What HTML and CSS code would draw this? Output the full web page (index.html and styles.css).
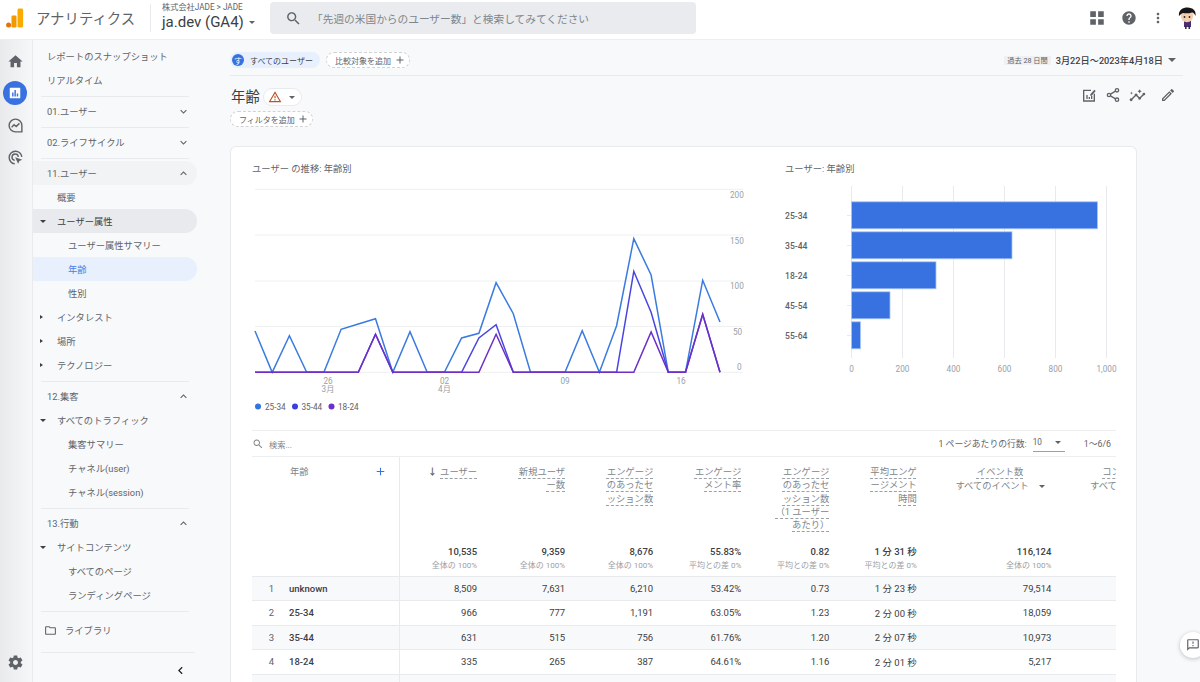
FILE: index.html
```html
<!DOCTYPE html>
<html lang="ja">
<head>
  <meta charset="UTF-8">
  <title>アナリティクス | 年齢</title>
  <link rel="stylesheet" href="styles.css">
</head>
<body>
  <svg class="sprite" width="0" height="0">
    <symbol id="i-more" viewBox="0 0 24 24"><path d="M7.41 8.59L12 13.17l4.59-4.58L18 10l-6 6-6-6z"/></symbol>
    <symbol id="i-less" viewBox="0 0 24 24"><path d="M12 8l-6 6 1.41 1.41L12 10.83l4.59 4.58L18 14z"/></symbol>
    <symbol id="i-search" viewBox="0 0 24 24"><path d="M15.5 14h-.79l-.28-.27C15.41 12.59 16 11.11 16 9.5 16 5.91 13.09 3 9.5 3S3 5.91 3 9.5 5.91 16 9.5 16c1.61 0 3.09-.59 4.23-1.57l.27.28v.79l5 4.99L20.49 19l-4.99-5zm-6 0C7.01 14 5 11.99 5 9.5S7.01 5 9.5 5 14 7.01 14 9.5 11.99 14 9.5 14z"/></symbol>
    <symbol id="i-plus" viewBox="0 0 24 24"><path d="M19 13h-6v6h-2v-6H5v-2h6V5h2v6h6z"/></symbol>
  </svg>

  <!-- top bar -->
  <header class="topbar">
    <svg class="logo" viewBox="0 0 18 20" width="18" height="20">
      <circle cx="2.6" cy="17" r="2.5" fill="#e8710a"/>
      <rect x="5.5" y="7.5" width="5" height="12" rx="1.2" fill="#f29900"/>
      <rect x="11.5" y="0.5" width="5.6" height="19" rx="1.4" fill="#f9ab00"/>
    </svg>
    <span class="app-name">アナリティクス</span>
    <div class="account">
      <div class="account-path">株式会社JADE &gt; JADE</div>
      <div class="account-name">ja.dev (GA4) <i class="caret"></i></div>
    </div>
    <div class="searchbox">
      <svg width="17" height="17" class="search-icon"><use href="#i-search"/></svg>
      <span>「先週の米国からのユーザー数」と検索してみてください</span>
    </div>
    <div class="top-icons">
      <svg class="ic" width="18" height="18" viewBox="0 0 24 24"><path d="M3 3h7.500v7.500H3zM13.500 3H21v7.500h-7.500zM3 13.500h7.500V21H3zM13.500 13.500H21V21h-7.500z"/></svg>
      <svg class="ic help" width="16" height="16" viewBox="0 0 24 24"><path d="M12 2C6.48 2 2 6.48 2 12s4.48 10 10 10 10-4.48 10-10S17.52 2 12 2zm1 17h-2v-2h2v2zm2.07-7.75l-.9.92C13.45 12.9 13 13.5 13 15h-2v-.5c0-1.1.45-2.1 1.17-2.83l1.24-1.26c.37-.36.59-.86.59-1.41 0-1.1-.9-2-2-2s-2 .9-2 2H8c0-2.21 1.79-4 4-4s4 1.79 4 4c0 .88-.36 1.68-.93 2.25z"/></svg>
      <svg class="ic dots" width="16" height="18" viewBox="0 0 24 24"><path d="M12 8c1.1 0 2-.9 2-2s-.9-2-2-2-2 .9-2 2 .9 2 2 2zm0 2c-1.1 0-2 .9-2 2s.9 2 2 2 2-.9 2-2-.9-2-2-2zm0 6c-1.1 0-2 .9-2 2s.9 2 2 2 2-.9 2-2-.9-2-2-2z"/></svg>
      <svg class="avatar" width="20" height="22" viewBox="0 0 20 22">
        <rect x="7" y="14" width="7" height="6" fill="#4b2d73"/>
        <rect x="8" y="19" width="1.6" height="3" fill="#333"/>
        <rect x="11.5" y="19" width="1.6" height="3" fill="#333"/>
        <circle cx="10" cy="9" r="6.2" fill="#f4cfae"/>
        <path d="M2 9C1 3 6 .5 10.500 .5 16 .5 19.500 4 18.500 9c-1-2-2-3.500-3.500-3.500C12 6.500 8 6.500 6 6c-1.500 .5-3 2-4 3z" fill="#16161a"/>
        <circle cx="7.500" cy="10" r=".9" fill="#222"/>
        <circle cx="12.500" cy="10" r=".9" fill="#222"/>
      </svg>
    </div>
  </header>

  <div class="layout">
    <!-- icon rail -->
    <div class="rail">
      <a class="rail-item"><svg class="ic" width="17" height="17" viewBox="0 0 24 24"><path d="M10 20v-6h4v6h5v-8h3L12 3 2 12h3v8z"/></svg></a>
      <a class="rail-item"><span class="rail-active"><svg width="14" height="14" viewBox="0 0 24 24"><path fill="#fff" fill-rule="evenodd" d="M4 3h16a1 1 0 0 1 1 1v16a1 1 0 0 1-1 1H4a1 1 0 0 1-1-1V4a1 1 0 0 1 1-1zm3 8v7h2.500v-7zm4-4v11h2.500V7zm4 6v5h2.500v-5z"/></svg></span></a>
      <a class="rail-item">
        <svg class="ol" width="17" height="17" viewBox="0 0 24 24" stroke="#5f6368" stroke-width="2"><path d="M21 20.500V12a9 9 0 1 0-9 9h9z"/><path d="M6.500 14.500l3.500-3.500 3 2.500 4.500-4.500"/></svg>
      </a>
      <a class="rail-item">
        <svg class="ol" width="17" height="17" viewBox="0 0 24 24" stroke="#5f6368" stroke-width="2"><path d="M21 11a9 9 0 1 0-10 10"/><path d="M16 11a4.500 4.500 0 1 0-5 5"/><path d="M11.500 11.500l10 3.500-4 1.800-1.800 4z" fill="#5f6368" stroke="none"/></svg>
      </a>
      <a class="rail-item rail-bottom"><svg class="ic" width="17" height="17" viewBox="0 0 24 24"><path d="M19.430 12.980c.04-.32.07-.64.07-.98s-.03-.66-.07-.98l2.110-1.650c.19-.15.24-.42.12-.64l-2-3.460c-.12-.22-.39-.3-.61-.22l-2.490 1c-.52-.4-1.080-.73-1.690-.98l-.38-2.650C14.460 2.180 14.250 2 14 2h-4c-.25 0-.46.18-.49.42l-.38 2.650c-.61.25-1.170.59-1.690.98l-2.490-1c-.23-.09-.49 0-.61.22l-2 3.460c-.13.22-.07.49.12.64l2.110 1.650c-.04.32-.07.65-.07.98s.03.66.07.98l-2.110 1.650c-.19.15-.24.42-.12.64l2 3.460c.12.22.39.3.61.22l2.490-1c.52.4 1.080.73 1.690.98l.38 2.650c.03.24.24.42.49.42h4c.25 0 .46-.18.49-.42l.38-2.650c.61-.25 1.170-.59 1.690-.98l2.490 1c.23.09.49 0 .61-.22l2-3.460c.12-.22.07-.49-.12-.64l-2.110-1.650zM12 15.500c-1.930 0-3.500-1.570-3.500-3.500s1.570-3.500 3.500-3.500 3.500 1.570 3.500 3.500-1.570 3.500-3.500 3.500z"/></svg></a>
    </div>

    <!-- report navigation -->
    <nav class="sidenav">
      <div class="nav-top">
        <div class="nav-row">レポートのスナップショット</div>
        <div class="nav-row">リアルタイム</div>
      </div>
      <div class="nav-section">
        <div class="nav-row">01.ユーザー<svg class="chev" width="13" height="13"><use href="#i-more"/></svg></div>
      </div>
      <div class="nav-section">
        <div class="nav-row">02.ライフサイクル<svg class="chev" width="13" height="13"><use href="#i-more"/></svg></div>
      </div>
      <div class="nav-section">
        <div class="nav-row head-on">11.ユーザー<svg class="chev" width="13" height="13"><use href="#i-less"/></svg></div>
        <div class="nav-row lv1">概要</div>
        <div class="nav-row lv1 has-tri group-on"><i class="tri down"></i>ユーザー属性</div>
        <div class="nav-row lv2">ユーザー属性サマリー</div>
        <div class="nav-row lv2 current">年齢</div>
        <div class="nav-row lv2">性別</div>
        <div class="nav-row lv1 has-tri"><i class="tri right"></i>インタレスト</div>
        <div class="nav-row lv1 has-tri"><i class="tri right"></i>場所</div>
        <div class="nav-row lv1 has-tri"><i class="tri right"></i>テクノロジー</div>
      </div>
      <div class="nav-section">
        <div class="nav-row">12.集客<svg class="chev" width="13" height="13"><use href="#i-less"/></svg></div>
        <div class="nav-row lv1 has-tri"><i class="tri down"></i>すべてのトラフィック</div>
        <div class="nav-row lv2">集客サマリー</div>
        <div class="nav-row lv2">チャネル(user)</div>
        <div class="nav-row lv2">チャネル(session)</div>
      </div>
      <div class="nav-section">
        <div class="nav-row">13.行動<svg class="chev" width="13" height="13"><use href="#i-less"/></svg></div>
        <div class="nav-row lv1 has-tri"><i class="tri down"></i>サイトコンテンツ</div>
        <div class="nav-row lv2">すべてのページ</div>
        <div class="nav-row lv2">ランディングページ</div>
      </div>
      <div class="nav-library">
        <svg class="ic" width="13" height="13" viewBox="0 0 24 24"><path d="M9.170 6l2 2H20v10H4V6h5.170M10 4H4c-1.100 0-1.990.9-1.990 2L2 18c0 1.100.9 2 2 2h16c1.100 0 2-.9 2-2V8c0-1.100-.9-2-2-2h-8l-2-2z"/></svg>
        <span>ライブラリ</span>
      </div>
      <div class="nav-collapse">
        <svg width="15" height="15" viewBox="0 0 24 24"><path fill="#202124" d="M15.410 7.410L14 6l-6 6 6 6 1.410-1.410L10.830 12z"/></svg>
      </div>
    </nav>

    <main class="content">
      <div class="filter-bar">
        <div class="chip chip-user"><span class="chip-badge">す</span>すべてのユーザー</div>
        <div class="chip chip-add">比較対象を追加<svg width="12" height="12"><use href="#i-plus"/></svg></div>
        <div class="date-range">
          <span class="date-tag">過去 28 日間</span>
          <span class="date-text">3月22日〜2023年4月18日</span>
          <i class="caret"></i>
        </div>
      </div>

      <div class="title-row">
        <h1>年齢</h1>
        <div class="title-pill">
          <svg width="14" height="14" viewBox="0 0 24 24"><path fill="#b8562c" d="M12 5.990L19.530 19H4.470L12 5.990M12 2L1 21h22L12 2zm1 14h-2v2h2v-2zm0-6h-2v4h2v-4z"/></svg>
          <i class="caret small"></i>
        </div>
        <div class="report-tools">
          <svg class="ic" width="16" height="16" viewBox="0 0 24 24"><path d="M3 4h12v2H5v14h14V10h2v12H3z"/><path d="M8 12h2v6H8zM11.500 15h2v3h-2zM15 13h2v5h-2z"/><path d="M14 11l6-7 2 2-6 7h-2z"/></svg>
          <svg class="ol" width="16" height="16" viewBox="0 0 24 24" stroke="#5f6368" stroke-width="2"><circle cx="18" cy="5" r="2.500"/><circle cx="6" cy="12" r="2.500"/><circle cx="18" cy="19" r="2.500"/><path d="M8.200 10.700l7.600-4.400M8.200 13.300l7.600 4.400"/></svg>
          <svg class="ic" width="17" height="17" viewBox="0 0 24 24"><path d="M21 8c-1.450 0-2.260 1.440-1.930 2.510l-3.550 3.560c-.3-.09-.74-.09-1.040 0l-2.550-2.550C12.270 10.450 11.460 9 10 9c-1.450 0-2.270 1.440-1.930 2.520l-4.560 4.550C2.440 15.740 1 16.550 1 18c0 1.100.9 2 2 2 1.450 0 2.260-1.440 1.930-2.510l4.550-4.560c.3.09.74.09 1.040 0l2.550 2.550C12.730 16.550 13.540 18 15 18c1.450 0 2.270-1.440 1.930-2.520l3.560-3.550c1.070.33 2.510-.48 2.510-1.930 0-1.100-.9-2-2-2z"/><path d="M15 9l.94-2.070L18 6l-2.060-.93L15 3l-.92 2.070L12 6l2.080.93zM3.500 11L4 9l2-.5L4 8l-.5-2L3 8l-2 .5L3 9z"/></svg>
          <svg class="ic tool-edit" width="16" height="16" viewBox="0 0 24 24"><path d="M14.060 9.020l.92.92L5.920 19H5v-.92l9.060-9.060M17.660 3c-.25 0-.51.1-.7.29l-1.830 1.830 3.750 3.750 1.830-1.830c.39-.39.39-1.020 0-1.410l-2.340-2.340c-.2-.2-.45-.29-.71-.29zm-3.600 3.190L3 17.250V21h3.750L17.810 9.940l-3.750-3.750z"/></svg>
        </div>
      </div>
      <div class="chip chip-add chip-filter">フィルタを追加<svg width="12" height="12"><use href="#i-plus"/></svg></div>

      <section class="card">
        <div class="charts">
          <div class="chart-line">
            <div class="chart-title">ユーザー の推移: 年齢別</div>
            <svg class="chart" width="500" height="235" viewBox="252 185 500 235">
              <g class="grid">
                <path d="M255 189.300H743M255 235H743M255 281H743M255 326.500H743M255 372.300H743"/>
              </g>
              <g class="axis">
                <text x="730" y="198">200</text>
                <text x="730" y="244">150</text>
                <text x="730" y="289">100</text>
                <text x="733" y="335">50</text>
                <text x="737" y="370">0</text>
                <text x="328" y="384" text-anchor="middle">26</text>
                <text x="328" y="392" text-anchor="middle">3月</text>
                <text x="444.500" y="384" text-anchor="middle">02</text>
                <text x="444.500" y="392" text-anchor="middle">4月</text>
                <text x="565" y="384" text-anchor="middle">09</text>
                <text x="681" y="384" text-anchor="middle">16</text>
              </g>
              <polyline class="s1" points="255,331 272.200,372.300 289.400,335.700 306.700,372.300 323.900,372.300 341.100,329.300 358.300,324 375.500,318.700 392.800,372.300 410,331.700 427.200,372.300 444.400,372.300 461.600,338 478.900,333.300 496.100,282.700 513.300,313.700 530.500,372.300 547.700,372.300 565,372.300 582.200,330.700 599.400,372.300 616.600,325.700 633.800,238.700 651.100,275 668.300,372.300 685.500,372.300 702.700,280.300 720,322"/>
              <polyline class="s2" points="255,372.300 358.300,372.300 375.500,334.300 392.800,372.300 461.600,372.300 478.900,338 496.100,324.700 513.300,372.300 616.600,372.300 633.800,271.300 651.100,312.300 668.300,372.300 685.500,372.300 702.700,314.300 720,372.300"/>
              <polyline class="s3" points="255,372.300 358.300,372.300 375.500,334.300 392.800,372.300 478.900,372.300 496.100,334.300 513.300,372.300 633.800,372.300 651.100,332 668.300,372.300 685.500,372.300 702.700,314.300 720,372.300"/>
              <g class="legend">
                <circle cx="258" cy="406.500" r="3" fill="#3474e0"/><text x="265" y="409.500">25-34</text>
                <circle cx="295" cy="406.500" r="3" fill="#3b3fe0"/><text x="301.500" y="409.500">35-44</text>
                <circle cx="331.500" cy="406.500" r="3" fill="#6d2fc7"/><text x="338" y="409.500">18-24</text>
              </g>
            </svg>
          </div>
          <div class="chart-bar">
            <div class="chart-title">ユーザー: 年齢別</div>
            <svg class="chart" width="331" height="195" viewBox="785 185 331 195">
              <g class="grid-v">
                <path d="M851.500 186V358M902.500 186V358M953.500 186V358M1004.500 186V358M1055.500 186V358M1106.500 186V358"/>
                <path d="M847 215.500H851M847 245.500H851M847 275.500H851M847 305.500H851M847 335.500H851"/>
              </g>
              <g class="bars">
                <rect x="851.500" y="201.800" width="246" height="27"/>
                <rect x="851.500" y="231.800" width="160.500" height="27"/>
                <rect x="851.500" y="261.800" width="84.500" height="27"/>
                <rect x="851.500" y="291.800" width="38.500" height="27"/>
                <rect x="851.500" y="321.800" width="9" height="27"/>
              </g>
              <g class="bar-labels">
                <text x="785" y="218.500">25-34</text>
                <text x="785" y="248.500">35-44</text>
                <text x="785" y="278.500">18-24</text>
                <text x="785" y="308.500">45-54</text>
                <text x="785" y="338.500">55-64</text>
              </g>
              <g class="axis">
                <text x="851.500" y="372" text-anchor="middle">0</text>
                <text x="902.500" y="372" text-anchor="middle">200</text>
                <text x="953.500" y="372" text-anchor="middle">400</text>
                <text x="1004.500" y="372" text-anchor="middle">600</text>
                <text x="1055.500" y="372" text-anchor="middle">800</text>
                <text x="1106.500" y="372" text-anchor="middle">1,000</text>
              </g>
            </svg>
          </div>
        </div>

        <div class="table-tools">
          <svg class="tool-search" width="12" height="12"><use href="#i-search"/></svg>
          <span class="tool-find">検索...</span>
          <span class="tool-label">1 ページあたりの行数:</span>
          <span class="tool-select">10<i class="caret small"></i></span>
          <span class="tool-range">1〜6/6</span>
        </div>

        <div class="table-clip">
          <table class="report">
            <colgroup>
              <col class="c-dim"><col class="c-users"><col class="c-n"><col class="c-n"><col class="c-n"><col class="c-n"><col class="c-time"><col class="c-ev"><col class="c-ev">
            </colgroup>
            <thead>
              <tr class="head">
                <th class="dim"><div class="dim-head"><span>年齢</span><svg width="13" height="13"><use href="#i-plus"/></svg></div></th>
                <th><span class="arrow">↓</span><u>ユーザー</u></th>
                <th><u>新規ユーザ<br>ー数</u></th>
                <th><u>エンゲージ<br>のあったセ<br>ッション数</u></th>
                <th><u>エンゲージ<br>メント率</u></th>
                <th><u>エンゲージ<br>のあったセ<br>ッション数<br>（1 ユーザー<br>あたり）</u></th>
                <th><u>平均エンゲ<br>ージメント<br>時間</u></th>
                <th class="ev"><u>イベント数</u><div class="ev-sel">すべてのイベント<i class="caret small"></i></div></th>
                <th class="ev"><u>コンバージョン</u><div class="ev-sel">すべてのイベント<i class="caret small"></i></div></th>
              </tr>
              <tr class="totals">
                <td class="dim"></td>
                <td><b>10,535</b><small>全体の 100%</small></td>
                <td><b>9,359</b><small>全体の 100%</small></td>
                <td><b>8,676</b><small>全体の 100%</small></td>
                <td><b>55.83%</b><small>平均との差 0%</small></td>
                <td><b>0.82</b><small>平均との差 0%</small></td>
                <td><b>1 分 31 秒</b><small>平均との差 0%</small></td>
                <td><b>116,124</b><small>全体の 100%</small></td>
                <td></td>
              </tr>
            </thead>
            <tbody>
              <tr><td class="dim"><span class="rank">1</span><span class="name">unknown</span></td><td>8,509</td><td>7,631</td><td>6,210</td><td>53.42%</td><td>0.73</td><td>1 分 23 秒</td><td>79,514</td><td></td></tr>
              <tr><td class="dim"><span class="rank">2</span><span class="name">25-34</span></td><td>966</td><td>777</td><td>1,191</td><td>63.05%</td><td>1.23</td><td>2 分 00 秒</td><td>18,059</td><td></td></tr>
              <tr><td class="dim"><span class="rank">3</span><span class="name">35-44</span></td><td>631</td><td>515</td><td>756</td><td>61.76%</td><td>1.20</td><td>2 分 07 秒</td><td>10,973</td><td></td></tr>
              <tr><td class="dim"><span class="rank">4</span><span class="name">18-24</span></td><td>335</td><td>265</td><td>387</td><td>64.61%</td><td>1.16</td><td>2 分 01 秒</td><td>5,217</td><td></td></tr>
              <tr><td class="dim"></td><td></td><td></td><td></td><td></td><td></td><td></td><td></td><td></td></tr>
            </tbody>
          </table>
        </div>
      </section>
    </main>
  </div>

  <!-- floating feedback button -->
  <button class="feedback">
    <svg class="ic" width="14" height="14" viewBox="0 0 24 24"><path d="M20 2H4c-1.100 0-2 .9-2 2v18l4-4h14c1.100 0 2-.9 2-2V4c0-1.100-.9-2-2-2zm0 14H5.170L4 17.170V4h16v12z"/><path d="M11 12h2v2h-2zm0-6h2v4h-2z"/></svg>
  </button>
</body>
</html>
```
FILE: styles.css
```css
* {
  box-sizing: border-box;
}

html, body {
  margin: 0;
  height: 682px;
  overflow: hidden;
}

body {
  font-family: Roboto, "Noto Sans CJK JP", sans-serif;
  font-size: 9.3px;
  color: #5f6368;
  background-color: #f8f9fa;
  display: flex;
  flex-direction: column;
}

.sprite {
  position: absolute;
}

svg {
  fill: #5f6368;
  flex: none;
}

svg.ol {
  fill: none;
}

.caret {
  display: inline-block;
  width: 0;
  height: 0;
  border-left: 4px solid transparent;
  border-right: 4px solid transparent;
  border-top: 4px solid #5f6368;
  vertical-align: middle;
}

.caret.small {
  border-left-width: 3px;
  border-right-width: 3px;
  border-top-width: 3px;
}

/* top bar */
.topbar {
  height: 40px;
  flex: none;
  background-color: #fff;
  border-bottom: 1px solid #eceef0;
  display: flex;
  align-items: center;
  padding-left: 6px;
}

.logo {
  margin-top: -4px;
}

.app-name {
  margin-left: 12px;
  width: 114px;
  font-size: 14.4px;
  color: #5f6368;
  white-space: nowrap;
  margin-top: -4px;
}

.account {
  border-left: 1px solid #e8eaed;
  padding-left: 11px;
  height: 28px;
  width: 120px;
  margin-top: -4px;
}

.account-path {
  font-size: 8.2px;
  line-height: 9px;
  margin-top: -1px;
  white-space: nowrap;
}

.account-name {
  font-size: 15px;
  line-height: 20px;
  color: #3c4043;
  white-space: nowrap;
}

.account-name .caret {
  border-left-width: 3.5px;
  border-right-width: 3.5px;
  border-top-width: 3.5px;
  margin-left: 1px;
}

.searchbox {
  width: 426px;
  height: 32px;
  margin-top: -3px;
  background-color: #e9ebee;
  border-radius: 4px;
  display: flex;
  align-items: center;
  padding-left: 15px;
  font-size: 10.7px;
  color: #80868b;
  white-space: nowrap;
}

.search-icon {
  margin-right: 14px;
}

.searchbox span {
  margin-left: -4px;
}

.top-icons {
  margin-left: auto;
  display: flex;
  align-items: center;
  padding-right: 3px;
  margin-top: -4px;
}

.top-icons .help {
  margin-left: 15px;
}

.top-icons .dots {
  margin-left: 13px;
}

.top-icons .avatar {
  margin-left: 11px;
}

/* layout */
.layout {
  flex: 1;
  display: flex;
  min-height: 0;
}

.rail {
  width: 33px;
  flex: none;
  padding: 5px 0 8px;
  display: flex;
  flex-direction: column;
  background: linear-gradient(to right, #e9eaec, #f6f7f9);
  border-right: 1px solid #e9ebed;
}

.rail-item {
  width: 30px;
  height: 32px;
  flex: none;
  display: flex;
  align-items: center;
  justify-content: center;
}

.rail-active {
  width: 24px;
  height: 24px;
  border-radius: 50%;
  background-color: #3871e0;
  display: flex;
  align-items: center;
  justify-content: center;
}

.rail-bottom {
  margin-top: auto;
  height: 24px;
}

/* side navigation */
.sidenav {
  width: 164px;
  flex: none;
  padding-top: 4px;
  color: #5f6368;
}

.nav-top {
  padding-bottom: 4px;
}

.nav-row {
  height: 24px;
  display: flex;
  align-items: center;
  padding-left: 14px;
  padding-right: 7px;
  white-space: nowrap;
  border-radius: 0 12px 12px 0;
}

.nav-row.lv1 {
  padding-left: 24px;
}

.nav-row.lv2 {
  padding-left: 35px;
}

.nav-row.has-tri {
  padding-left: 7px;
}

.tri {
  width: 0;
  height: 0;
  flex: none;
  margin-right: 11px;
}

.tri.down {
  width: 6px;
  border-left: 3px solid transparent;
  border-right: 3px solid transparent;
  border-top: 3px solid #3c4043;
}

.tri.right {
  width: 6px;
  border-top: 2.5px solid transparent;
  border-bottom: 2.5px solid transparent;
  border-left: 3px solid #3c4043;
}

.chev {
  margin-left: auto;
}

.head-on {
  background-color: #f1f3f4;
}

.group-on {
  background-color: #e8eaed;
  color: #3c4043;
}

.current {
  background-color: #e8f0fe;
  color: #4a80e0;
}

.nav-section {
  padding-bottom: 4px;
}

/* divider above every nav group */
.nav-section::before,
.nav-library::before {
  content: "";
  display: block;
  height: 1px;
  margin: 0 8px 2px;
  background-color: #e8eaed;
}

.nav-library {
  height: 42px;
  border-bottom: 1px solid #e8eaed;
  margin-left: 8px;
  margin-right: 2px;
  display: flex;
  flex-wrap: wrap;
  align-items: flex-start;
  align-content: flex-start;
  padding-left: 3px;
  color: #5f6368;
}

.nav-library::before {
  flex: 0 0 148px;
  margin: 0 0 12px -3px;
}

.nav-library span {
  margin-left: 8px;
  line-height: 13px;
}

.nav-collapse {
  display: flex;
  justify-content: flex-end;
  padding: 10px 9px 0 0;
}

/* report area */
.content {
  flex: 1;
  min-width: 0;
  padding: 12px 17px 0 33px;
}

.filter-bar {
  display: flex;
  align-items: center;
  gap: 6px;
  padding-bottom: 7px;
  border-bottom: 1px solid #e8eaed;
  height: 24px;
}

.chip {
  height: 16px;
  border-radius: 8px;
  display: inline-flex;
  align-items: center;
  font-size: 8px;
  white-space: nowrap;
  color: #5f6368;
}

.chip-user {
  width: 90px;
  background-color: #e8f0fe;
  padding-left: 2px;
  color: #3c4043;
}

.chip-badge {
  width: 12px;
  height: 12px;
  border-radius: 50%;
  background-color: #3871e0;
  color: #fff;
  font-size: 8px;
  display: flex;
  align-items: center;
  justify-content: center;
  margin-right: 6px;
}

.chip-add {
  width: 84px;
  border: 1px dashed #d0d3d6;
  padding-left: 8px;
  background-color: #fff;
  justify-content: space-between;
  padding-right: 3px;
}

.chip-filter {
  width: 83px;
  margin-top: 5px;
  display: flex;
}

.date-range {
  margin-left: auto;
  display: flex;
  align-items: center;
  padding-right: 7px;
}

.date-tag {
  font-size: 7.2px;
  background-color: #eef0f2;
  padding: 0 3px;
  height: 9px;
  line-height: 9px;
  margin-right: 5px;
}

.date-text {
  font-size: 9.2px;
  font-weight: 500;
  color: #3c4043;
  margin-right: 5px;
}

.title-row {
  display: flex;
  align-items: center;
  margin-top: 12px;
  height: 18px;
}

h1 {
  margin: -3px 3px 0 1px;
  font-size: 14.4px;
  font-weight: 400;
  color: #3c4043;
}

.title-pill {
  width: 39px;
  height: 18px;
  border: 1px solid #e8eaed;
  border-radius: 9px;
  background-color: #fff;
  display: flex;
  align-items: center;
  padding-left: 4px;
  gap: 7px;
}

.report-tools {
  margin-left: auto;
  margin-top: -4px;
  display: flex;
  align-items: center;
  gap: 8px;
  padding-right: 7px;
}

.tool-edit {
  margin-left: 6px;
}

/* card */
.card {
  width: 907px;
  margin-top: 19px;
  height: 536px;
  overflow: hidden;
  background-color: #fff;
  border: 1px solid #e8eaed;
  border-bottom: none;
  border-radius: 6px 6px 0 0;
  padding: 15px 20px 0 21px;
}

.charts {
  display: flex;
  height: 268px;
}

.chart-line {
  width: 533px;
}

.chart-title {
  height: 13px;
  line-height: 13px;
  margin-bottom: 10px;
  white-space: nowrap;
}

.chart {
  display: block;
  overflow: visible;
}

.grid path {
  stroke: #eef0f1;
  fill: none;
}

.grid-v path {
  stroke: #e8eaed;
  fill: none;
}

.axis text {
  font-size: 8.2px;
  fill: #9aa0a6;
}

.s1, .s2, .s3 {
  fill: none;
  stroke-width: 1.5;
}

.s1 { stroke: #3a7be0; }
.s2 { stroke: #4a45e0; }
.s3 { stroke: #6d2fc7; }

.legend text {
  font-size: 8.2px;
  fill: #5f6368;
}

.bars rect {
  fill: #3871e0;
  stroke: #a9c5f5;
  stroke-width: 0.8;
}

.bar-labels text {
  font-size: 8.6px;
  font-weight: 500;
  fill: #5f6368;
}

/* table */
.table-tools {
  height: 27px;
  border-top: 1px solid #eceef0;
  border-bottom: 1px solid #eceef0;
  display: flex;
  align-items: center;
  font-size: 8.2px;
  white-space: nowrap;
}

.tool-search {
  margin-right: 5px;
  fill: #80868b;
}

.tool-find {
  color: #80868b;
}

.tool-label {
  margin-left: auto;
  font-size: 8.8px;
}

.tool-select {
  width: 32px;
  margin-left: 6px;
  height: 16px;
  line-height: 14px;
  border-bottom: 1px solid #9aa0a6;
  display: flex;
  justify-content: space-between;
  align-items: center;
  padding: 0 4px 2px 0;
}

.tool-range {
  margin-left: 19px;
  margin-right: 5px;
  font-size: 8.8px;
}

.table-clip {
  overflow: hidden;
}

.report {
  border-collapse: collapse;
  table-layout: fixed;
  width: 934px;
}

.c-dim { width: 147px; }
.c-users { width: 78px; }
.c-n { width: 88px; }
.c-time { width: 87.5px; }
.c-ev { width: 134.5px; }

.report th,
.report td {
  padding: 0;
  text-align: right;
  vertical-align: top;
  font-weight: 400;
}

.report .dim {
  border-right: 1px solid #e8eaed;
  text-align: left;
}

.head th {
  height: 87px;
  padding-top: 8px;
  line-height: 13.3px;
  font-size: 9.3px;
  color: #80868b;
}

.head u {
  text-decoration: underline dashed #9aa0a6;
  text-underline-offset: 3px;
  text-decoration-thickness: 1px;
}

.arrow {
  color: #5f6368;
  font-weight: 700;
  margin-right: 3px;
}

.dim-head {
  display: flex;
  justify-content: space-between;
  align-items: center;
  padding: 0 12px 0 38px;
}

.dim-head svg {
  fill: #3871e0;
}

.report .ev {
  text-align: center;
  padding-left: 32px;
}

.ev-sel {
  white-space: nowrap;
  margin-top: 1px;
  color: #80868b;
}

.ev-sel .caret {
  margin-left: 10px;
}

.totals td {
  height: 32px;
  padding-top: 1px;
}

.totals b {
  display: block;
  font-size: 9.5px;
  font-weight: 500;
  line-height: 14px;
  color: #3c4043;
}

.totals small {
  display: block;
  font-size: 8px;
  line-height: 14px;
  color: #9aa0a6;
}

.report tbody tr {
  height: 24.5px;
  border-top: 1px solid #e8eaed;
}

.report tbody tr:nth-child(odd) {
  background-color: #f8f9fa;
}

.report tbody td {
  vertical-align: middle;
  font-size: 9.5px;
  color: #3c4043;
}

.rank {
  display: inline-block;
  width: 37px;
  padding-right: 15px;
  text-align: right;
  color: #5f6368;
}

.name {
  font-weight: 500;
}

.feedback {
  position: absolute;
  left: 1180px;
  top: 632px;
  width: 26px;
  height: 26px;
  border: none;
  border-radius: 50%;
  background-color: #fff;
  box-shadow: 0 1px 4px rgba(60, 64, 67, 0.3);
  padding: 0;
  display: flex;
  align-items: center;
  justify-content: center;
}
```
